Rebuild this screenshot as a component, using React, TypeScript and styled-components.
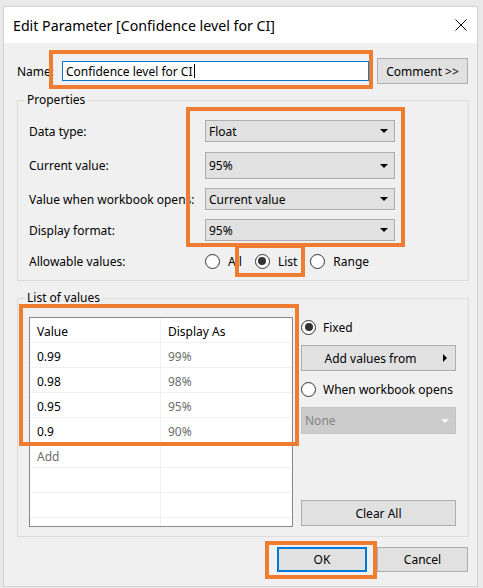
import React from "react";
import styled, { createGlobalStyle } from "styled-components";

const Global = createGlobalStyle`
  html, body { margin: 0; padding: 0; background: #e9e9e9; }
  body { font-family: "Noto Sans", "Open Sans", sans-serif; font-size: 12px; color: #000; }
  * { box-sizing: border-box; }
`;

const ORANGE = "#ee7d31";

const Page = styled.div`
  position: relative;
  width: 483px;
  height: 588px;
  overflow: hidden;
  padding: 6px 0 0 3px;
  background: #e9e9e9;
`;

const Window = styled.div`
  width: 475px;
  height: 581px;
  background: #f0f0f0;
  border: 1px solid #d2d2d2;
  display: flex;
  flex-direction: column;
`;

const TitleBar = styled.div`
  height: 36px;
  flex: none;
  background: #fff;
  display: flex;
  align-items: center;
  justify-content: space-between;
  padding: 0 10px 0 9px;
`;

const Title = styled.div`
  font-size: 14.2px;
`;

const CloseIcon = styled.svg`
  width: 12px;
  height: 12px;
  display: block;
`;

const Body = styled.div`
  flex: 1;
  display: flex;
  flex-direction: column;
  padding: 15px 8px 0 13px;
`;

const NameRow = styled.div`
  height: 26px;
  display: flex;
  align-items: center;
  gap: 8px;
`;

const NameLabel = styled.div`
  width: 37px;
`;

const TextInput = styled.div`
  width: 307px;
  height: 20px;
  background: #fff;
  border: 1px solid #0078d7;
  display: flex;
  align-items: center;
  padding-left: 3px;
`;

const Caret = styled.span`
  display: inline-block;
  width: 1px;
  height: 14px;
  background: #000;
  margin-left: 1px;
`;

const Button = styled.div<{ $w: number; $h?: number; $focus?: boolean }>`
  width: ${(p) => p.$w}px;
  height: ${(p) => p.$h ?? 26}px;
  background: #e1e1e1;
  border: ${(p) => (p.$focus ? "2px solid #0078d7" : "1px solid #adadad")};
  display: flex;
  align-items: center;
  justify-content: center;
  position: relative;
  flex: none;
`;

const ButtonText = styled.span`
  margin-right: 16px;
`;

const Group = styled.fieldset<{ $mt: number; $pt: number; $pb: number }>`
  margin: ${(p) => p.$mt}px 0 0 0;
  padding: ${(p) => p.$pt}px 11px ${(p) => p.$pb}px 11px;
  border: 1px solid #dcdcdc;
  min-width: 0;
`;

const Legend = styled.legend`
  padding: 0 2px;
  margin-left: -4px;
  line-height: 16px;
  font-size: 12px;
`;

const PropRows = styled.div`
  display: flex;
  flex-direction: column;
`;

const PropRow = styled.div<{ $mt?: number }>`
  height: 26px;
  margin-top: ${(p) => p.$mt ?? 0}px;
  display: grid;
  grid-template-columns: 176px 190px;
  align-items: center;
`;

const Label = styled.div`
  white-space: nowrap;
`;

const Select = styled.div<{ $h?: number; $disabled?: boolean }>`
  height: ${(p) => p.$h ?? 22}px;
  background: ${(p) => (p.$disabled ? "#cccccc" : "#e1e1e1")};
  border: 1px solid ${(p) => (p.$disabled ? "#c4c4c4" : "#adadad")};
  color: ${(p) => (p.$disabled ? "#838383" : "#000")};
  display: flex;
  align-items: center;
  justify-content: space-between;
  padding: 0 6px 0 3px;
`;

const DownArrow = styled.span<{ $light?: boolean }>`
  width: 0;
  height: 0;
  border-left: 4px solid transparent;
  border-right: 4px solid transparent;
  border-top: 4px solid ${(p) => (p.$light ? "#f4f4f4" : "#000")};
`;

const RightArrow = styled.span`
  position: absolute;
  right: 8px;
  top: 50%;
  margin-top: -4px;
  width: 0;
  height: 0;
  border-top: 4px solid transparent;
  border-bottom: 4px solid transparent;
  border-left: 4px solid #000;
`;

const Radios = styled.div`
  display: flex;
  align-items: center;
  gap: 13px;
`;

const RadioItem = styled.div<{ $gap?: number }>`
  display: flex;
  align-items: center;
  gap: ${(p) => p.$gap ?? 8}px;
  height: 20px;
  flex: none;
`;

const RadioCircle = styled.span<{ $checked?: boolean }>`
  width: 15px;
  height: 15px;
  border-radius: 50%;
  border: 1px solid #333;
  background: #fff;
  display: flex;
  align-items: center;
  justify-content: center;
  flex: none;
  &::after {
    content: "";
    display: ${(p) => (p.$checked ? "block" : "none")};
    width: 8px;
    height: 8px;
    border-radius: 50%;
    background: #333;
  }
`;

const ListArea = styled.div`
  display: flex;
  gap: 8px;
  height: 210px;
`;

const Table = styled.div`
  width: 264px;
  height: 210px;
  border: 1px solid #828790;
  background: #fff;
  overflow: hidden;
  flex: none;
`;

const TRow = styled.div`
  height: 25px;
  display: grid;
  grid-template-columns: 131px 1fr;
  border-bottom: 1px solid #f0f0f0;
`;

const Cell = styled.div<{ $muted?: boolean }>`
  display: flex;
  align-items: center;
  padding: 2px 0 0 7px;
  color: ${(p) => (p.$muted ? "#6d6d6d" : "#000")};
  &:first-child {
    border-right: 1px solid #f0f0f0;
  }
`;

const SidePanel = styled.div`
  width: 155px;
  display: flex;
  flex-direction: column;
`;

const Spacer = styled.div<{ $h: number }>`
  height: ${(p) => p.$h}px;
  flex: none;
`;

const Footer = styled.div`
  display: flex;
  justify-content: flex-end;
  gap: 10px;
  margin-top: 10px;
  padding-right: 1px;
`;

const Highlight = styled.div<{ $x: number; $y: number; $w: number; $h: number }>`
  position: absolute;
  left: ${(p) => p.$x}px;
  top: ${(p) => p.$y}px;
  width: ${(p) => p.$w}px;
  height: ${(p) => p.$h}px;
  border: 4px solid ${ORANGE};
  pointer-events: none;
`;

const rows: [string, string][] = [
  ["0.99", "99%"],
  ["0.98", "98%"],
  ["0.95", "95%"],
  ["0.9", "90%"],
];

export default function App() {
  return (
    <>
      <Global />
      <Page>
        <Window>
          <TitleBar>
            <Title>Edit Parameter [Confidence level for CI]</Title>
            <CloseIcon viewBox="0 0 12 12">
              <path d="M0.5 0.5 L11.5 11.5 M11.5 0.5 L0.5 11.5" stroke="#000" strokeWidth="1" fill="none" />
            </CloseIcon>
          </TitleBar>
          <Body>
            <NameRow>
              <NameLabel>Name:</NameLabel>
              <TextInput>
                Confidence level for CI
                <Caret />
              </TextInput>
              <Button $w={91}>Comment &gt;&gt;</Button>
            </NameRow>

            <Group $mt={8} $pt={10} $pb={6}>
              <Legend>Properties</Legend>
              <PropRows>
                <PropRow>
                  <Label>Data type:</Label>
                  <Select>
                    Float
                    <DownArrow />
                  </Select>
                </PropRow>
                <PropRow $mt={8}>
                  <Label>Current value:</Label>
                  <Select $h={27}>
                    95%
                    <DownArrow />
                  </Select>
                </PropRow>
                <PropRow $mt={8}>
                  <Label>Value when workbook opens:</Label>
                  <Select>
                    Current value
                    <DownArrow />
                  </Select>
                </PropRow>
                <PropRow $mt={5}>
                  <Label>Display format:</Label>
                  <Select>
                    95%
                    <DownArrow />
                  </Select>
                </PropRow>
                <PropRow $mt={5}>
                  <Label>Allowable values:</Label>
                  <Radios>
                    <RadioItem>
                      <RadioCircle />
                      All
                    </RadioItem>
                    <RadioItem>
                      <RadioCircle $checked />
                      List
                    </RadioItem>
                    <RadioItem>
                      <RadioCircle />
                      Range
                    </RadioItem>
                  </Radios>
                </PropRow>
              </PropRows>
            </Group>

            <Group $mt={9} $pt={11} $pb={9}>
              <Legend>List of values</Legend>
              <ListArea>
                <Table>
                  <TRow>
                    <Cell>Value</Cell>
                    <Cell>Display As</Cell>
                  </TRow>
                  {rows.map(([v, d]) => (
                    <TRow key={v}>
                      <Cell>{v}</Cell>
                      <Cell $muted>{d}</Cell>
                    </TRow>
                  ))}
                  <TRow>
                    <Cell $muted>Add</Cell>
                    <Cell />
                  </TRow>
                  <TRow>
                    <Cell />
                    <Cell />
                  </TRow>
                  <TRow>
                    <Cell />
                    <Cell />
                  </TRow>
                  <TRow>
                    <Cell />
                    <Cell />
                  </TRow>
                </Table>
                <SidePanel>
                  <RadioItem $gap={7}>
                    <RadioCircle $checked />
                    Fixed
                  </RadioItem>
                  <Spacer $h={8} />
                  <Button $w={155}>
                    <ButtonText>Add values from</ButtonText>
                    <RightArrow />
                  </Button>
                  <Spacer $h={8} />
                  <RadioItem $gap={7}>
                    <RadioCircle />
                    When workbook opens
                  </RadioItem>
                  <Spacer $h={8} />
                  <Select $h={27} $disabled>
                    None
                    <DownArrow $light />
                  </Select>
                  <Spacer $h={66} />
                  <Button $w={155}>Clear All</Button>
                </SidePanel>
              </ListArea>
            </Group>

            <Footer>
              <Button $w={90} $h={25} $focus>
                OK
              </Button>
              <Button $w={91} $h={25}>
                Cancel
              </Button>
            </Footer>
          </Body>
        </Window>

        <Highlight $x={49} $y={50} $w={324} $h={39} />
        <Highlight $x={186} $y={107} $w={219} $h={140} />
        <Highlight $x={235} $y={244} $w={70} $h={33} />
        <Highlight $x={19} $y={304} $w={280} $h={142} />
        <Highlight $x={265} $y={541} $w={112} $h={38} />
      </Page>
    </>
  );
}
